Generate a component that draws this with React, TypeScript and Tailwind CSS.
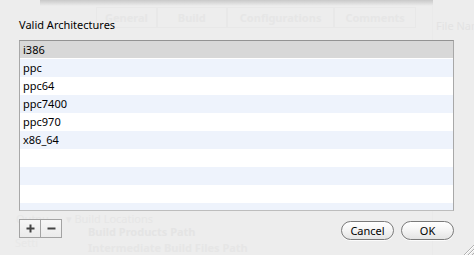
const archs = ['i386', 'ppc', 'ppc64', 'ppc7400', 'ppc970', 'x86_64', '', '', '', '']

export default function App() {
  return (
    <div className="relative w-[474px] h-[255px] overflow-hidden bg-[#ededed] font-['Noto_Sans','DejaVu_Sans',sans-serif] text-black">
      {/* faded window content behind the sheet */}
      <div className="absolute inset-0 text-[#e6e6e6] text-[11px] leading-[13px] whitespace-nowrap pointer-events-none select-none">
        <div className="absolute left-[96px] top-[7px] flex">
          <span className="px-[8px] py-[3px] border border-[#e8e8e8] font-bold">General</span>
          <span className="px-[20px] py-[3px] border border-[#e8e8e8] font-bold">Build</span>
          <span className="px-[12px] py-[3px] border border-[#e8e8e8] font-bold">Configurations</span>
          <span className="px-[10px] py-[3px] border border-[#e8e8e8] font-bold">Comments</span>
        </div>
        <div className="absolute left-[432px] top-0 w-[1px] h-[255px] bg-[#eaeaea]" />
        <div className="absolute left-[436px] top-[19px] text-[#e3e3e3]">File Name</div>
        <div className="absolute left-[66px] top-[212px] text-[#e6e6e6]">▾ Build Locations</div>
        <div className="absolute left-[88px] top-[225px] font-bold text-[#e4e4e4]">Build Products Path</div>
        <div className="absolute left-[88px] top-[241px] font-bold text-[#e6e6e6]">Intermediate Build Files Path</div>
        <div className="absolute left-[16px] top-[212px] text-[#e6e6e6]">Outpu</div>
        <div className="absolute left-[15px] top-[236px] text-[#e8e8e8]">Setti</div>
      </div>

      {/* shadow from the panel above */}
      <div className="absolute left-[40px] top-0 w-[393px] h-[6px] bg-gradient-to-b from-[#c9c9c9] to-[#ededed]" />

      <div className="relative flex flex-col px-[19px] pt-[18px]">
        <div className="text-[11px] leading-[14px] h-[22px]">Valid Architectures</div>

        <div className="w-[435px] h-[171px] border border-[#a8a8a8] border-t-[#939393] border-b-[#bdbdbd] bg-white overflow-hidden">
          {archs.map((a, i) => (
            <div
              key={i}
              className={`h-[18px] pl-[3px] text-[11px] leading-[17px] ${
                i === 0 ? 'bg-[#d8d8d8] border-b border-white' : i % 2 === 1 ? 'bg-[#eef3fc]' : 'bg-white'
              }`}
            >
              {a}
            </div>
          ))}
        </div>

        <div className="flex items-start justify-between mt-[8px]">
          <div className="flex h-[19px] border border-[#a3a3a3] bg-gradient-to-b from-[#f7f7f7] to-[#ebebeb]">
            <button className="w-[21px] flex items-center justify-center border-r border-[#a3a3a3]">
              <svg width="9" height="9" viewBox="0 0 9 9">
                <path d="M4.5 0.5v8M0.5 4.5h8" stroke="#444" strokeWidth="2" />
              </svg>
            </button>
            <button className="w-[20px] flex items-center justify-center">
              <svg width="9" height="9" viewBox="0 0 9 9">
                <path d="M0.5 4.5h8" stroke="#444" strokeWidth="2" />
              </svg>
            </button>
          </div>

          <div className="flex gap-[7px] mt-[2px] mr-[1px]">
            <button className="w-[53px] h-[19px] rounded-full border border-[#7a7a7a] bg-gradient-to-b from-white via-[#f4f4f4] to-[#e4e4e4] text-[11px] leading-[16px] shadow-[0_1px_0_rgba(255,255,255,0.8)]">
              Cancel
            </button>
            <button className="w-[53px] h-[19px] rounded-full border border-[#7a7a7a] bg-gradient-to-b from-white via-[#f4f4f4] to-[#e4e4e4] text-[11px] leading-[16px] shadow-[0_1px_0_rgba(255,255,255,0.8)]">
              OK
            </button>
          </div>
        </div>
      </div>

      {/* resize grip */}
      <svg className="absolute right-0 bottom-0" width="12" height="12" viewBox="0 0 12 12">
        <path d="M12 2L2 12M12 6L6 12M12 10L10 12" stroke="#b0b0b0" strokeWidth="1" />
        <path d="M12 3L3 12M12 7L7 12" stroke="#ffffff" strokeWidth="1" />
      </svg>
    </div>
  )
}
